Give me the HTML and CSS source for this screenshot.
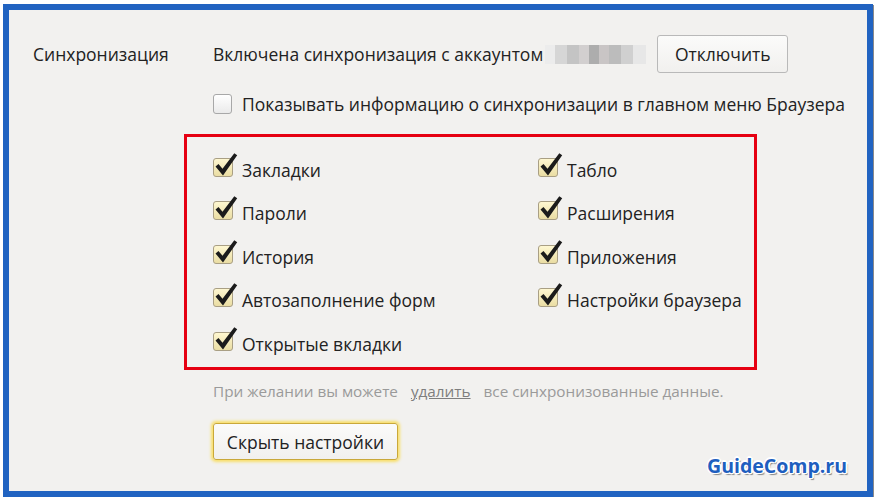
FILE: index.html
```html
<!DOCTYPE html>
<html lang="ru">
<head>
<meta charset="utf-8">
<title>Синхронизация</title>
<link rel="stylesheet" href="styles.css">
</head>
<body>
<div class="frame">
  <div class="section">
    <div class="label">Синхронизация</div>
    <div class="content">
      <div class="account-row">
        <span class="account-text">Включена синхронизация с аккаунтом</span>
        <span class="blur"></span>
        <button class="btn btn-off">Отключить</button>
      </div>
      <label class="show-row">
        <span class="cb-empty"></span>
        <span>Показывать информацию о синхронизации в главном меню Браузера</span>
      </label>
      <div class="redbox">
        <div class="grid">
          <div class="item"><svg class="cb" viewBox="0 0 25 26" width="25" height="26"><defs><linearGradient id="g1" x1="0" y1="0" x2="0" y2="1"><stop offset="0" stop-color="#fff8d2"/><stop offset="1" stop-color="#e9dca2"/></linearGradient></defs><rect x="0.5" y="6.5" width="19" height="18" rx="2.5" fill="url(#g1)" stroke="#a99f84"/><path d="M2.5 14.5 L5.5 12 L9.5 16.8 L21.3 1.2 L24.2 3.3 L10 23.5 Z" fill="#1b1b1b"/></svg><span>Закладки</span></div>
          <div class="item"><svg class="cb" viewBox="0 0 25 26" width="25" height="26"><rect x="0.5" y="6.5" width="19" height="18" rx="2.5" fill="url(#g1)" stroke="#a99f84"/><path d="M2.5 14.5 L5.5 12 L9.5 16.8 L21.3 1.2 L24.2 3.3 L10 23.5 Z" fill="#1b1b1b"/></svg><span>Табло</span></div>
          <div class="item"><svg class="cb" viewBox="0 0 25 26" width="25" height="26"><rect x="0.5" y="6.5" width="19" height="18" rx="2.5" fill="url(#g1)" stroke="#a99f84"/><path d="M2.5 14.5 L5.5 12 L9.5 16.8 L21.3 1.2 L24.2 3.3 L10 23.5 Z" fill="#1b1b1b"/></svg><span>Пароли</span></div>
          <div class="item"><svg class="cb" viewBox="0 0 25 26" width="25" height="26"><rect x="0.5" y="6.5" width="19" height="18" rx="2.5" fill="url(#g1)" stroke="#a99f84"/><path d="M2.5 14.5 L5.5 12 L9.5 16.8 L21.3 1.2 L24.2 3.3 L10 23.5 Z" fill="#1b1b1b"/></svg><span>Расширения</span></div>
          <div class="item"><svg class="cb" viewBox="0 0 25 26" width="25" height="26"><rect x="0.5" y="6.5" width="19" height="18" rx="2.5" fill="url(#g1)" stroke="#a99f84"/><path d="M2.5 14.5 L5.5 12 L9.5 16.8 L21.3 1.2 L24.2 3.3 L10 23.5 Z" fill="#1b1b1b"/></svg><span>История</span></div>
          <div class="item"><svg class="cb" viewBox="0 0 25 26" width="25" height="26"><rect x="0.5" y="6.5" width="19" height="18" rx="2.5" fill="url(#g1)" stroke="#a99f84"/><path d="M2.5 14.5 L5.5 12 L9.5 16.8 L21.3 1.2 L24.2 3.3 L10 23.5 Z" fill="#1b1b1b"/></svg><span>Приложения</span></div>
          <div class="item"><svg class="cb" viewBox="0 0 25 26" width="25" height="26"><rect x="0.5" y="6.5" width="19" height="18" rx="2.5" fill="url(#g1)" stroke="#a99f84"/><path d="M2.5 14.5 L5.5 12 L9.5 16.8 L21.3 1.2 L24.2 3.3 L10 23.5 Z" fill="#1b1b1b"/></svg><span>Автозаполнение форм</span></div>
          <div class="item"><svg class="cb" viewBox="0 0 25 26" width="25" height="26"><rect x="0.5" y="6.5" width="19" height="18" rx="2.5" fill="url(#g1)" stroke="#a99f84"/><path d="M2.5 14.5 L5.5 12 L9.5 16.8 L21.3 1.2 L24.2 3.3 L10 23.5 Z" fill="#1b1b1b"/></svg><span>Настройки браузера</span></div>
          <div class="item"><svg class="cb" viewBox="0 0 25 26" width="25" height="26"><rect x="0.5" y="6.5" width="19" height="18" rx="2.5" fill="url(#g1)" stroke="#a99f84"/><path d="M2.5 14.5 L5.5 12 L9.5 16.8 L21.3 1.2 L24.2 3.3 L10 23.5 Z" fill="#1b1b1b"/></svg><span>Открытые вкладки</span></div>
        </div>
      </div>
      <p class="hint">При желании вы можете <a class="del">удалить</a> все синхронизованные данные.</p>
      <button class="btn btn-hide">Скрыть настройки</button>
    </div>
  </div>
  <div class="watermark">GuideComp.ru</div>
</div>
</body>
</html>
```

FILE: styles.css
```css
* { box-sizing: border-box; }
html, body { margin: 0; padding: 0; background: #ffffff; }
body {
  font-family: "Open Sans", "Noto Sans", "DejaVu Sans", sans-serif;
  color: #222;
  font-size: 17.5px;
}
.frame {
  position: relative;
  width: 870px;
  height: 493px;
  margin: 4px 0 0 3px;
  border: 6px solid #2163c1;
  background: #f2f1ef;
  box-shadow: 1px 1px 0 #8a8a8a;
  padding: 25px 0 0 24px;
}
.section { display: flex; }
.label {
  width: 180px;
  height: 38px;
  line-height: 38px;
  flex: none;
}
.content { display: flex; flex-direction: column; align-items: flex-start; }
.account-row { display: flex; align-items: center; height: 38px; white-space: nowrap; }
.blur {
  width: 101px;
  height: 19px;
  margin-left: 2px;
  background: linear-gradient(90deg,
    #ececec 0 10px, #d6d6d6 10px 22px, #c4c4c4 22px 34px, #d2cfcf 34px 44px,
    #adadad 44px 54px, #c9c5c5 54px 64px, #bcbcbc 64px 76px, #d0d0d0 76px 88px, #e7e7e7 88px 101px);
}
.btn {
  font-family: inherit;
  font-size: 17.5px;
  color: #222;
  background: linear-gradient(#fbfbfa, #f1f0ee);
  border: 1px solid #b9b9b9;
  border-radius: 3px;
  padding: 0;
  cursor: pointer;
}
.btn-off { margin-left: 11px; width: 131px; height: 38px; flex: none; }
.show-row {
  display: flex;
  align-items: center;
  height: 20px;
  margin-top: 21px;
  gap: 10px;
  white-space: nowrap;
}
.cb-empty {
  width: 19px;
  height: 20px;
  border: 1px solid #a8a8a8;
  border-radius: 3px;
  background: linear-gradient(#ffffff, #eaeaea);
  flex: none;
}
.redbox {
  margin: 20px 0 0 -29px;
  width: 573px;
  height: 236px;
  border: 3px solid #e60012;
  padding: 11px 0 0 26px;
}
.grid {
  display: grid;
  grid-template-columns: 325px auto;
  grid-auto-rows: 43.5px;
}
.item { display: flex; align-items: center; gap: 4px; white-space: nowrap; }
.cb { flex: none; margin-bottom: 10px; }
.hint {
  margin: 11px 0 0;
  line-height: 20px;
  font-size: 15.3px;
  color: #9a9a9a;
  white-space: nowrap;
}
.del { color: #7e7e7e; text-decoration: underline; margin: 0 9px; }
.btn-hide {
  margin-top: 22px;
  width: 185px;
  height: 37px;
  border-color: #c9a83a;
  box-shadow: 0 0 3px 2px #f8df6a;
}
.watermark {
  position: absolute;
  right: 20px;
  bottom: 12px;
  font-family: "Open Sans", "DejaVu Sans", sans-serif;
  font-weight: 700;
  font-size: 19.5px;
  color: #1f5fbf;
  text-shadow: -1px -1px 0 #fff, 1px -1px 0 #fff, -1px 1px 0 #fff, 1px 1px 0 #fff, 0 -2px 0 #fff, 2px 0 0 #fff, 2px 2px 1px #888;
}
```
